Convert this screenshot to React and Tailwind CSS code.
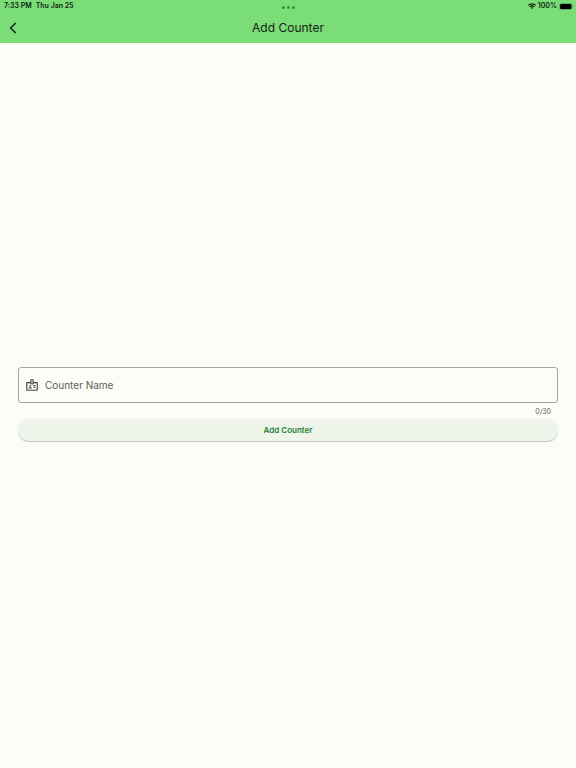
import { useState } from 'react';

const MAX_LENGTH = 30;

const StatusBar = () => {
  return (
    <div className="relative flex h-3 items-center justify-between pl-1 pr-0.5 text-[7px] leading-3 font-semibold text-[#10240f]">
      <div className="flex gap-1">
        <span>7:33 PM</span>
        <span>Thu Jan 25</span>
      </div>
      <div className="absolute inset-x-0 top-1.5 flex justify-center gap-0.5">
        <span className="size-[3px] rounded-full bg-[#2f9a3c]" />
        <span className="size-[3px] rounded-full bg-[#2f9a3c]" />
        <span className="size-[3px] rounded-full bg-[#2f9a3c]" />
      </div>
      <div className="flex items-center gap-0.5">
        <svg viewBox="0 0 16 12" className="h-1.5 w-2" fill="none" stroke="#0b1a0a">
          <path d="M.8 4.600a10.200 10.200 0 0 1 14.400 0" strokeWidth="2.6" />
          <path d="M3.600 7.600a6.200 6.200 0 0 1 8.800 0" strokeWidth="2.4" />
          <path d="M8 12 5.600 9.600a3.400 3.400 0 0 1 4.800 0z" fill="#0b1a0a" stroke="none" />
        </svg>
        <span>100%</span>
        <svg viewBox="0 0 30 14" className="h-[7px] w-[15px]">
          <rect x="0.7" y="0.7" width="25.6" height="12.6" rx="4" fill="none" stroke="#4a8a49" strokeWidth="1.2" />
          <rect x="2.2" y="2.2" width="22.6" height="9.6" rx="2.4" fill="#000" />
          <path d="M27.6 4.6c1.6.6 1.6 4.2 0 4.8z" fill="#4a8a49" />
        </svg>
      </div>
    </div>
  );
};

const BadgeIcon = () => {
  return (
    <svg viewBox="0 0 24 24" className="size-[14px] shrink-0" fill="#414941">
      <path d="M20 7h-5V4c0-1.1-.9-2-2-2h-2c-1.1 0-2 .9-2 2v3H4c-1.1 0-2 .9-2 2v11c0 1.1.9 2 2 2h16c1.1 0 2-.9 2-2V9c0-1.1-.9-2-2-2zm-9-3h2v5h-2V4zm9 16H4V9h5c0 1.1.9 2 2 2h2c1.1 0 2-.9 2-2h5v11z" />
      <circle cx="9" cy="13.5" r="1.5" />
      <path d="M11.08 16.18C10.44 15.9 9.74 15.75 9 15.75s-1.44.15-2.08.43C6.36 16.42 6 16.96 6 17.57V18h6v-.43c0-.61-.36-1.15-.92-1.39zM14 12h4v1.5h-4zM14 15h4v1.5h-4z" />
    </svg>
  );
};

const App = () => {
  const [name, setName] = useState('');

  return (
    <div className="flex min-h-screen flex-col bg-[#fcfdf6] font-['Inter',sans-serif]">
      <header className="bg-[#7add78]">
        <StatusBar />
        <div className="grid h-[31px] grid-cols-[26px_1fr_26px] items-center">
          <button type="button" aria-label="Back" className="flex h-6 items-center justify-center">
            <svg viewBox="0 0 8 12" className="h-3 w-2" fill="none" stroke="#1a1c19" strokeWidth="1.5">
              <path d="M6.8 1 1.6 6l5.200 5" />
            </svg>
          </button>
          <h1 className="text-center text-[12px] leading-4 text-[#1a1c19]">Add Counter</h1>
        </div>
      </header>

      <main className="flex grow flex-col justify-center px-[18px] pb-1">
        <label className="flex h-9 items-center gap-[6px] rounded-[3px] border border-[#a3a8a1] px-[6px]">
          <BadgeIcon />
          <input
            type="text"
            aria-label="Counter Name"
            placeholder="Counter Name"
            maxLength={MAX_LENGTH}
            value={name}
            onChange={(e) => setName(e.target.value)}
            className="h-full grow bg-transparent text-[10px] text-[#1a1c19] outline-none placeholder:text-[#5b625a]"
          />
        </label>
        <div className="h-4 px-[7px] pt-[3px] text-right text-[7px] leading-3 text-[#5b625a]">
          {name.length}/{MAX_LENGTH}
        </div>
        <button
          type="button"
          className="h-[22px] rounded-full bg-[#eef4ea] text-[8px] leading-3 font-semibold text-[#1f8238] shadow-[0_1px_1px_rgba(0,0,0,0.22)]"
        >
          Add Counter
        </button>
      </main>
    </div>
  );
};

export default App;
